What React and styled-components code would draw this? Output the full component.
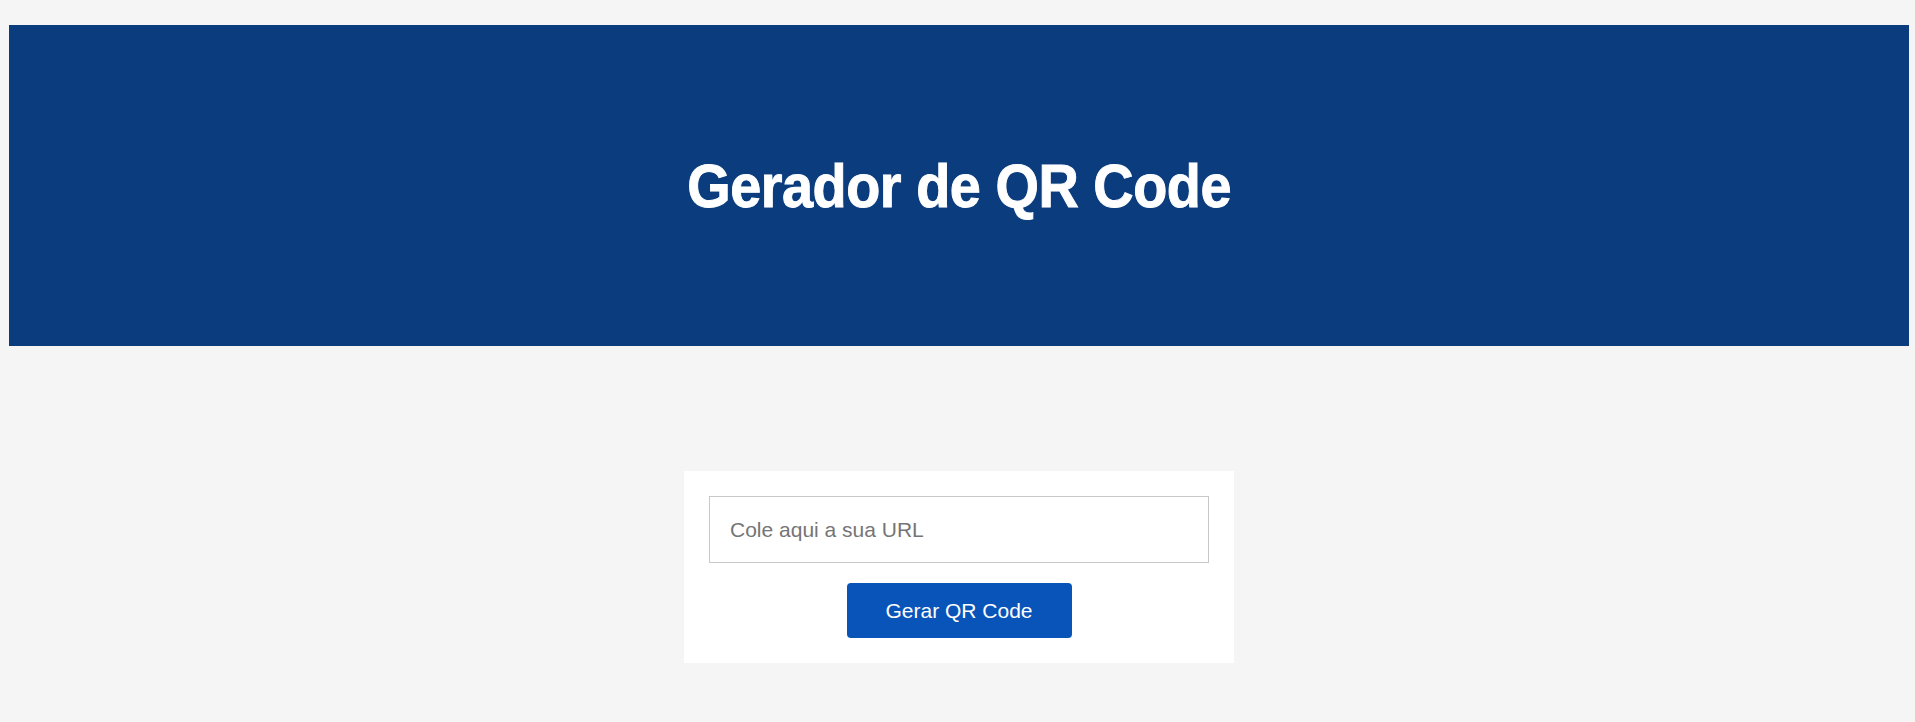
import React, { useState } from 'react';
import styled, { createGlobalStyle } from 'styled-components';

const GlobalStyle = createGlobalStyle`
    * {
        box-sizing: border-box;
    }
    html, body {
        margin: 0;
        padding: 0;
        background: #f5f5f5;
        font-family: "Liberation Sans", Arial, sans-serif;
    }
`

export default function App() {
    const [url, setUrl] = useState('');

    return (
        <>
            <GlobalStyle />
            <Page>
                <Header>
                    <Title>Gerador de QR Code</Title>
                </Header>
                <Main>
                    <Card onSubmit={(e) => e.preventDefault()}>
                        <UrlInput
                            type="text"
                            placeholder="Cole aqui a sua URL"
                            value={url}
                            onChange={(e) => setUrl(e.target.value)}
                        />
                        <GenerateButton type="submit">Gerar QR Code</GenerateButton>
                    </Card>
                </Main>
            </Page>
        </>
    )
}

const Page = styled.div`
    min-height: 100vh;
    padding: 25px 6px 0 9px;
    background: #f5f5f5;
`
const Header = styled.header`
    height: 321px;
    background: #0b3c7e;
    display: flex;
    align-items: center;
    justify-content: center;
`
const Title = styled.h1`
    margin: 0;
    color: #fff;
    font-size: 62px;
    font-weight: 700;
    letter-spacing: -0.5px;
    line-height: 1;
    transform: scaleX(0.9);
    -webkit-text-stroke: 1px #fff;
`
const Main = styled.main`
    display: flex;
    justify-content: center;
    padding-top: 125px;
`
const Card = styled.form`
    width: 550px;
    background: #fff;
    padding: 25px;
    display: flex;
    flex-direction: column;
    align-items: center;
    gap: 20px;
`
const UrlInput = styled.input`
    width: 100%;
    height: 67px;
    border: 1px solid #c8c8c8;
    padding: 0 20px;
    font-family: "Liberation Sans", Arial, sans-serif;
    font-size: 21px;
    color: #333;
    outline: none;
    &::placeholder {
        color: #757575;
    }
`
const GenerateButton = styled.button`
    width: 225px;
    height: 55px;
    border: none;
    border-radius: 4px;
    background: #0954b9;
    color: #fff;
    font-family: "Liberation Sans", Arial, sans-serif;
    font-size: 21px;
    cursor: pointer;
`
